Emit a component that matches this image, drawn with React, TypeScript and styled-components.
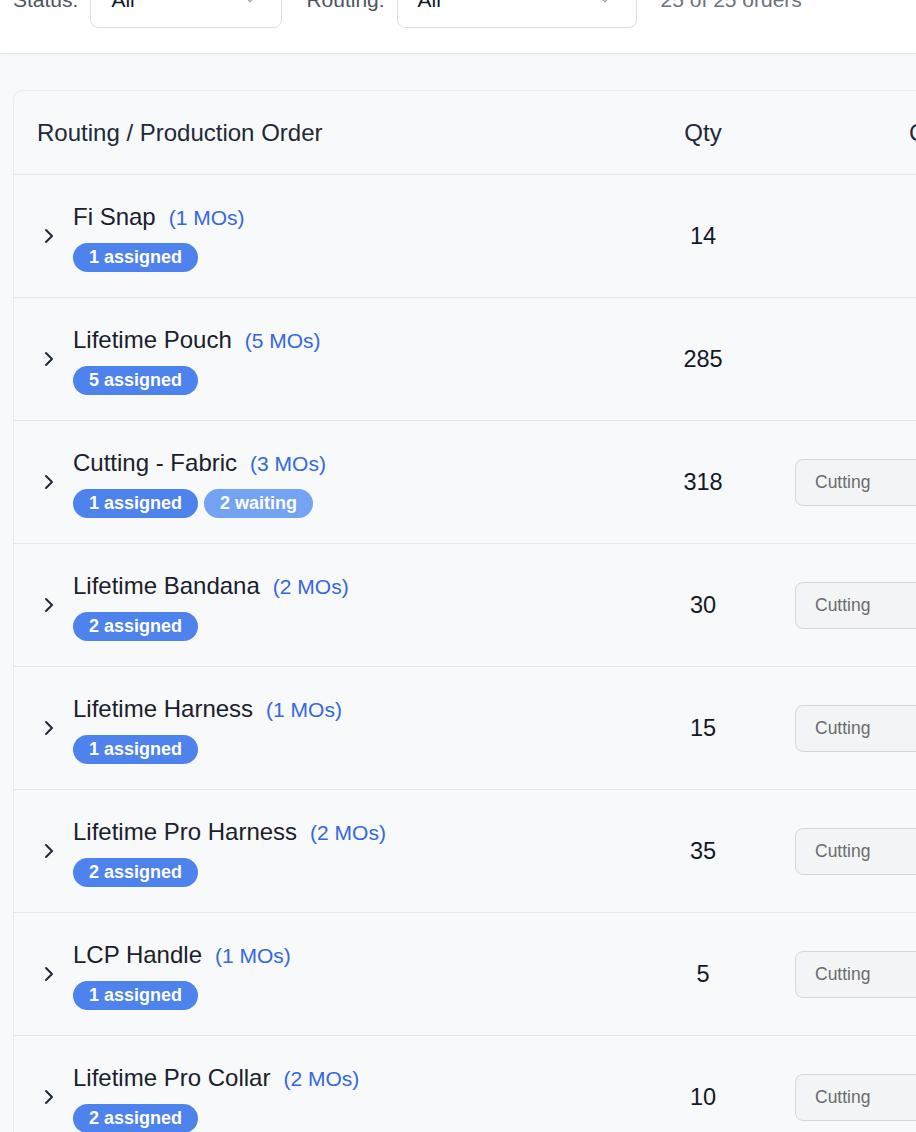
import React from "react";
import styled, { createGlobalStyle } from "styled-components";
import { ChevronRight, ChevronDown } from "lucide-react";

const Global = createGlobalStyle`
  html, body { margin: 0; padding: 0; background: #f8f9fb; overflow: hidden; }
  body { font-family: "Liberation Sans", Arial, Helvetica, sans-serif; color: #1f2937; }
`;

const Page = styled.div`
  min-height: 1132px;
  background: #f8f9fb;
`;

const TopBar = styled.div`
  margin-top: -28px;
  background: #ffffff;
  border-bottom: 1px solid #e5e7eb;
  box-shadow: 0 1px 3px rgba(0, 0, 0, 0.04);
  display: flex;
  align-items: center;
  gap: 12px;
  padding: 0 0 25px 13px;
  height: 56px;
`;

const Label = styled.span`
  font-size: 21px;
  color: #4b5563;
`;

const FilterSelect = styled.div<{ $w: number }>`
  box-sizing: border-box;
  width: ${(p) => p.$w}px;
  height: 56px;
  border: 1px solid #dcdfe4;
  border-radius: 8px;
  background: #fff;
  display: flex;
  align-items: center;
  justify-content: space-between;
  padding: 0 24px 0 20px;
  font-size: 21px;
  color: #111827;
  margin-right: 12px;
  svg { color: #9ca3af; }
`;

const Count = styled.span`
  font-size: 21px;
  color: #6b7280;
`;

const Main = styled.div`
  padding: 36px 0 0 13px;
`;

const Card = styled.div`
  width: 1100px;
  border: 1px solid #e8eaee;
  border-radius: 10px;
  background: #f8f9fb;
`;

const Row = styled.div<{ $head?: boolean }>`
  display: grid;
  grid-template-columns: 627px 124px 1fr;
  align-items: center;
  height: ${(p) => (p.$head ? "83px" : "122px")};
  border-bottom: 1px solid #e5e7eb;
`;

const HeadCell = styled.div<{ $center?: boolean; $pad?: number }>`
  font-size: 24px;
  color: #1f2937;
  padding-left: ${(p) => (p.$pad ?? 0)}px;
  text-align: ${(p) => (p.$center ? "center" : "left")};
  white-space: nowrap;
`;

const NameCell = styled.div`
  display: flex;
  align-items: center;
  gap: 12px;
  padding-left: 23px;
  svg { color: #1f2937; flex-shrink: 0; }
`;

const NameStack = styled.div`
  display: flex;
  flex-direction: column;
  gap: 11px;
  padding-top: 2px;
`;

const TitleLine = styled.div`
  display: flex;
  align-items: baseline;
  gap: 13px;
  line-height: 28px;
`;

const Title = styled.span`
  font-size: 24px;
  color: #1a202c;
`;

const MoCount = styled.span`
  font-size: 21px;
  color: #3567e0;
`;

const Badges = styled.div`
  display: flex;
  gap: 6px;
`;

const Badge = styled.span<{ $light?: boolean }>`
  display: inline-flex;
  align-items: center;
  height: 29px;
  padding: 0 16px;
  border-radius: 14.5px;
  background: ${(p) => (p.$light ? "#74a3f4" : "#4e82ec")};
  color: #fff;
  font-size: 18px;
  font-weight: 700;
`;

const Qty = styled.div`
  text-align: center;
  font-size: 23.5px;
  color: #111827;
`;

const StepCell = styled.div`
  padding-left: 30px;
`;

const StepSelect = styled.div`
  box-sizing: border-box;
  width: 240px;
  height: 47px;
  border: 1px solid #d4d6da;
  border-radius: 8px;
  background: #f3f4f6;
  display: flex;
  align-items: center;
  padding-left: 19px;
  font-size: 17.5px;
  color: #6b6b6b;
`;

type Item = { name: string; mos: number; assigned: number; waiting?: number; qty: number; step?: boolean };

const items: Item[] = [
  { name: "Fi Snap", mos: 1, assigned: 1, qty: 14 },
  { name: "Lifetime Pouch", mos: 5, assigned: 5, qty: 285 },
  { name: "Cutting - Fabric", mos: 3, assigned: 1, waiting: 2, qty: 318, step: true },
  { name: "Lifetime Bandana", mos: 2, assigned: 2, qty: 30, step: true },
  { name: "Lifetime Harness", mos: 1, assigned: 1, qty: 15, step: true },
  { name: "Lifetime Pro Harness", mos: 2, assigned: 2, qty: 35, step: true },
  { name: "LCP Handle", mos: 1, assigned: 1, qty: 5, step: true },
  { name: "Lifetime Pro Collar", mos: 2, assigned: 2, qty: 10, step: true },
];

export default function App() {
  return (
    <Page>
      <Global />
      <TopBar>
        <Label>Status:</Label>
        <FilterSelect $w={192}>
          All <ChevronDown size={14} />
        </FilterSelect>
        <Label>Routing:</Label>
        <FilterSelect $w={240}>
          All <ChevronDown size={14} />
        </FilterSelect>
        <Count>25 of 25 orders</Count>
      </TopBar>
      <Main>
        <Card>
          <Row $head>
            <HeadCell $pad={23}>Routing / Production Order</HeadCell>
            <HeadCell $center>Qty</HeadCell>
            <HeadCell $pad={144}>Current Step</HeadCell>
          </Row>
          {items.map((it) => (
            <Row key={it.name}>
              <NameCell>
                <ChevronRight size={24} strokeWidth={2} />
                <NameStack>
                  <TitleLine>
                    <Title>{it.name}</Title>
                    <MoCount>({it.mos} MOs)</MoCount>
                  </TitleLine>
                  <Badges>
                    <Badge>{it.assigned} assigned</Badge>
                    {it.waiting ? <Badge $light>{it.waiting} waiting</Badge> : null}
                  </Badges>
                </NameStack>
              </NameCell>
              <Qty>{it.qty}</Qty>
              <StepCell>{it.step ? <StepSelect>Cutting</StepSelect> : null}</StepCell>
            </Row>
          ))}
        </Card>
      </Main>
    </Page>
  );
}
